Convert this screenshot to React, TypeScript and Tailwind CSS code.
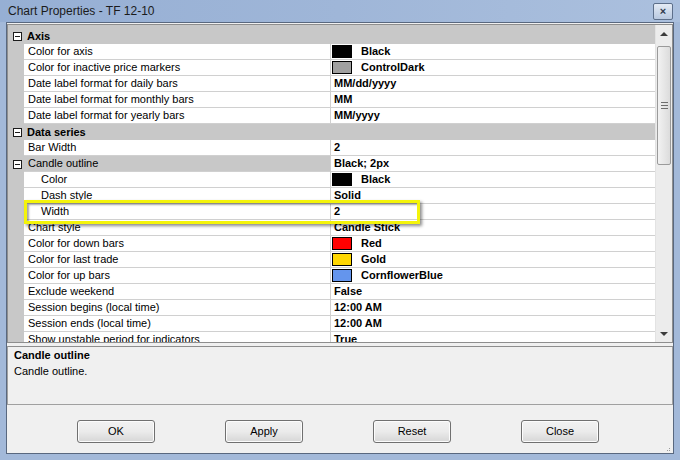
import React from 'react'

type Row =
  | { kind: 'cat'; label: string }
  | {
      kind: 'prop'
      label: string
      value: string
      swatch?: string
      sub?: boolean
      expander?: boolean
      selected?: boolean
    }

const rows: Row[] = [
  { kind: 'cat', label: 'Axis' },
  { kind: 'prop', label: 'Color for axis', value: 'Black', swatch: '#000000' },
  { kind: 'prop', label: 'Color for inactive price markers', value: 'ControlDark', swatch: '#a0a0a0' },
  { kind: 'prop', label: 'Date label format for daily bars', value: 'MM/dd/yyyy' },
  { kind: 'prop', label: 'Date label format for monthly bars', value: 'MM' },
  { kind: 'prop', label: 'Date label format for yearly bars', value: 'MM/yyyy' },
  { kind: 'cat', label: 'Data series' },
  { kind: 'prop', label: 'Bar Width', value: '2' },
  { kind: 'prop', label: 'Candle outline', value: 'Black; 2px', expander: true, selected: true },
  { kind: 'prop', label: 'Color', value: 'Black', swatch: '#000000', sub: true },
  { kind: 'prop', label: 'Dash style', value: 'Solid', sub: true },
  { kind: 'prop', label: 'Width', value: '2', sub: true },
  { kind: 'prop', label: 'Chart style', value: 'Candle Stick' },
  { kind: 'prop', label: 'Color for down bars', value: 'Red', swatch: '#ff0000' },
  { kind: 'prop', label: 'Color for last trade', value: 'Gold', swatch: '#ffd700' },
  { kind: 'prop', label: 'Color for up bars', value: 'CornflowerBlue', swatch: '#6495ed' },
  { kind: 'prop', label: 'Exclude weekend', value: 'False' },
  { kind: 'prop', label: 'Session begins (local time)', value: '12:00 AM' },
  { kind: 'prop', label: 'Session ends (local time)', value: '12:00 AM' },
  { kind: 'prop', label: 'Show unstable period for indicators', value: 'True' },
]

function Minus() {
  return (
    <span className="flex h-[9px] w-[9px] items-center justify-center border border-[#1c1c1c] bg-white">
      <span className="h-px w-[5px] bg-[#1c1c1c]" />
    </span>
  )
}

function GridRow({ row }: { row: Row }) {
  if (row.kind === 'cat') {
    return (
      <div className="flex h-[16px] shrink-0 items-center bg-[#c8c8c8]">
        <div className="flex w-[17px] justify-center pl-[1px]">
          <Minus />
        </div>
        <span className="pl-[2px] font-bold text-black">{row.label}</span>
      </div>
    )
  }
  return (
    <div className="flex h-[16px] shrink-0">
      <div className="flex w-[16px] items-center justify-center bg-[#c8c8c8] pl-[2px]">
        {row.expander ? <Minus /> : null}
      </div>
      <div
        className={`flex w-[307px] items-center border-b border-r border-[#d0d0d0] ${row.sub ? 'pl-[17px]' : 'pl-[4px]'} ${row.selected ? 'bg-[#c8c8c8]' : 'bg-white'}`}
      >
        {row.label}
      </div>
      <div className="flex flex-1 items-center border-b border-[#d0d0d0] bg-white pl-[1px] font-bold">
        {row.swatch ? (
          <>
            <span className="h-[13px] w-[20px] border border-black" style={{ backgroundColor: row.swatch }} />
            <span className="pl-[9px]">{row.value}</span>
          </>
        ) : (
          <span className="pl-[2px]">{row.value}</span>
        )}
      </div>
    </div>
  )
}

function ScrollBar() {
  return (
    <div className="flex w-[17px] flex-col border-l border-[#e3e3e3] bg-[#ececec]">
      <div className="flex h-[17px] items-center justify-center">
        <span className="h-0 w-0 border-x-[4px] border-b-[4px] border-x-transparent border-b-[#3c3c3c]" />
      </div>
      <div className="mx-[1px] mt-[4px] flex h-[119px] flex-col items-center justify-center gap-[2px] rounded-[2px] border border-[#9a9a9a] bg-gradient-to-r from-[#f2f2f2] to-[#dcdcdc]">
        <span className="h-px w-[7px] bg-[#6e6e6e]" />
        <span className="h-px w-[7px] bg-[#6e6e6e]" />
        <span className="h-px w-[7px] bg-[#6e6e6e]" />
      </div>
      <div className="flex-1" />
      <div className="flex h-[17px] items-center justify-center">
        <span className="h-0 w-0 border-x-[4px] border-t-[4px] border-x-transparent border-t-[#3c3c3c]" />
      </div>
    </div>
  )
}

function Button({ label }: { label: string }) {
  return (
    <button
      type="button"
      className="h-[23px] w-[78px] rounded-[3px] border border-[#707070] bg-gradient-to-b from-[#f2f2f2] via-[#ebebeb] to-[#d6d6d6] text-[11px] text-black shadow-[inset_0_0_0_1px_#fcfcfc]"
    >
      {label}
    </button>
  )
}

export default function App() {
  return (
    <div
      className="relative flex h-[460px] w-[680px] flex-col bg-[#a3b9d9] text-[11px] text-black"
      style={{ fontFamily: '"Liberation Sans", Arial, sans-serif' }}
    >
      {/* title bar */}
      <div className="flex h-[22px] shrink-0 items-center justify-between bg-gradient-to-r from-[#96afd4] via-[#9fb6d8] to-[#abc0de] pl-[8px] pr-[7px]">
        <span className="text-[12px] text-[#1b1b1b]">Chart Properties - TF 12-10</span>
        <span className="flex h-[17px] w-[20px] items-center justify-center rounded-[2px] border border-[#5d6f8a] bg-gradient-to-b from-[#e4ebf5] to-[#b9c9e0] text-[11px] font-bold leading-none text-[#2f3b4d]">
          ×
        </span>
      </div>

      <div className="mx-[6px] mb-[6px] flex flex-1 flex-col border border-[#59687f] bg-[#f0f0f0]">
        {/* property grid */}
        <div className="mt-[1px] flex h-[319px] border border-[#8e8e8e] bg-[#c8c8c8]">
          <div className="flex flex-1 flex-col overflow-hidden pt-[3px]">
            {rows.map((r, i) => (
              <GridRow key={i} row={r} />
            ))}
          </div>
          <ScrollBar />
        </div>

        {/* description pane */}
        <div className="mt-[3px] flex h-[59px] flex-col border border-[#a0a0a0] border-t-[#8e8e8e] px-[6px] leading-[16px]">
          <span className="font-bold">Candle outline</span>
          <span>Candle outline.</span>
        </div>

        <div className="flex flex-1 items-center pl-[70px] pt-[5px]">
          <div className="flex gap-[70px]">
            <Button label="OK" />
            <Button label="Apply" />
            <Button label="Reset" />
            <Button label="Close" />
          </div>
        </div>
        <div className="absolute bottom-[9px] right-[10px] grid grid-cols-3 gap-[1px]">
          <span />
          <span />
          <span className="h-px w-px bg-[#9a9a9a]" />
          <span />
          <span className="h-px w-px bg-[#9a9a9a]" />
          <span className="h-px w-px bg-[#9a9a9a]" />
        </div>
      </div>

      {/* yellow callout around the Width row */}
      <div className="absolute left-[24px] top-[200px] h-[24px] w-[396px] border-[3px] border-[#f4f40a] shadow-[2px_2px_3px_rgba(0,0,0,0.45),inset_2px_2px_2px_rgba(0,0,0,0.35)]" />
    </div>
  )
}
